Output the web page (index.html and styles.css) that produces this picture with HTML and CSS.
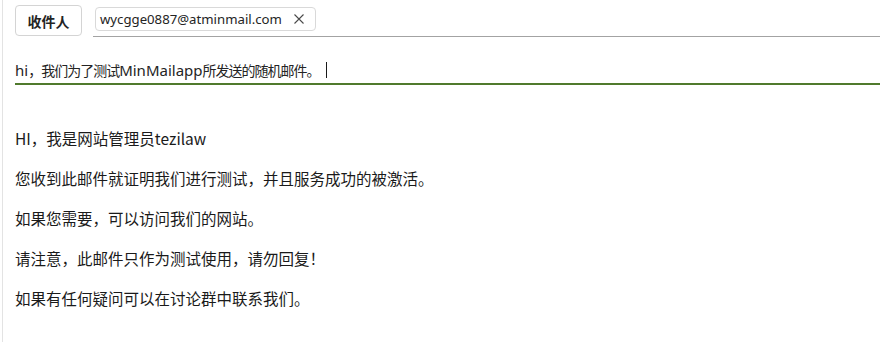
FILE: index.html
```html
<!DOCTYPE html>
<html lang="zh-CN">
<head>
<meta charset="utf-8">
<title>Compose</title>
<link rel="stylesheet" href="styles.css">
</head>
<body>
<div class="frame">
  <div class="to-row">
    <button class="to-btn">收件人</button>
    <div class="recipients">
      <span class="chip">
        <span class="chip-text">wycgge0887@atminmail.com</span>
        <svg class="chip-x" width="12" height="12" viewBox="0 0 12 12" aria-hidden="true">
          <path d="M1.5 1.5 L10.5 10.5 M10.5 1.5 L1.5 10.5" stroke="#4a4a4a" stroke-width="1.1" fill="none"/>
        </svg>
      </span>
    </div>
  </div>
  <div class="subject">
    <span class="lat">hi</span><span class="cjk">，我们为了测试</span><span class="lat">MinMailapp</span><span class="cjk">所发送的随机邮件。</span><span class="caret"></span>
  </div>
  <div class="body">
    <p>HI，我是网站管理员tezilaw</p>
    <p>您收到此邮件就证明我们进行测试，并且服务成功的被激活。</p>
    <p>如果您需要，可以访问我们的网站。</p>
    <p>请注意，此邮件只作为测试使用，请勿回复！</p>
    <p>如果有任何疑问可以在讨论群中联系我们。</p>
  </div>
</div>
</body>
</html>
```

FILE: styles.css
```css
html, body {
  margin: 0;
  padding: 0;
  background: #ffffff;
  height: 100%;
  overflow: hidden;
}

body {
  padding-left: 2px;
  font-family: "Noto Sans", "Noto Sans CJK SC", sans-serif;
  color: #242424;
}

.frame {
  border-left: 1px solid #e3e3e3;
  min-height: 342px;
  padding-left: 12px;
  box-sizing: border-box;
}

.to-row {
  display: flex;
  align-items: flex-start;
  height: 37px;
}

.to-btn {
  margin-top: 5px;
  width: 67px;
  height: 31px;
  background: #ffffff;
  border: 1px solid #d4d4d4;
  border-radius: 4px;
  font-family: "Noto Sans CJK SC", sans-serif;
  font-weight: 700;
  font-size: 14px;
  color: #242424;
  padding: 0;
  box-sizing: border-box;
}

.recipients {
  flex: 1;
  margin-left: 11px;
  height: 36px;
  border-bottom: 1px solid #a3a3a3;
  padding-left: 2px;
  box-sizing: content-box;
}

.chip {
  margin-top: 7px;
  display: inline-flex;
  align-items: center;
  height: 24px;
  box-sizing: border-box;
  border: 1px solid #d9d9d9;
  border-radius: 4px;
  padding: 0 10px 0 4px;
}

.chip-text {
  font-family: "Noto Sans", sans-serif;
  font-size: 13.2px;
  color: #242424;
}

.chip-x {
  margin-left: 11px;
}

.subject {
  height: 48px;
  border-bottom: 2px solid #507a2d;
  display: flex;
  align-items: center;
  padding-top: 20px;
  box-sizing: border-box;
  white-space: nowrap;
}

.subject .lat {
  font-family: "Noto Sans", sans-serif;
  font-size: 15px;
}

.subject .cjk {
  font-family: "Noto Sans CJK SC", sans-serif;
  font-size: 14px;
  letter-spacing: -1px;
}

.caret {
  display: inline-block;
  width: 1px;
  height: 16px;
  background: #1a1a1a;
  margin-left: 6px;
}

.body {
  padding-top: 41px;
  font-family: "Noto Sans CJK SC", sans-serif;
  font-size: 15.5px;
  color: #1a1a1a;
}

.body p {
  margin: 0 0 16px 0;
  line-height: 24px;
}
```
